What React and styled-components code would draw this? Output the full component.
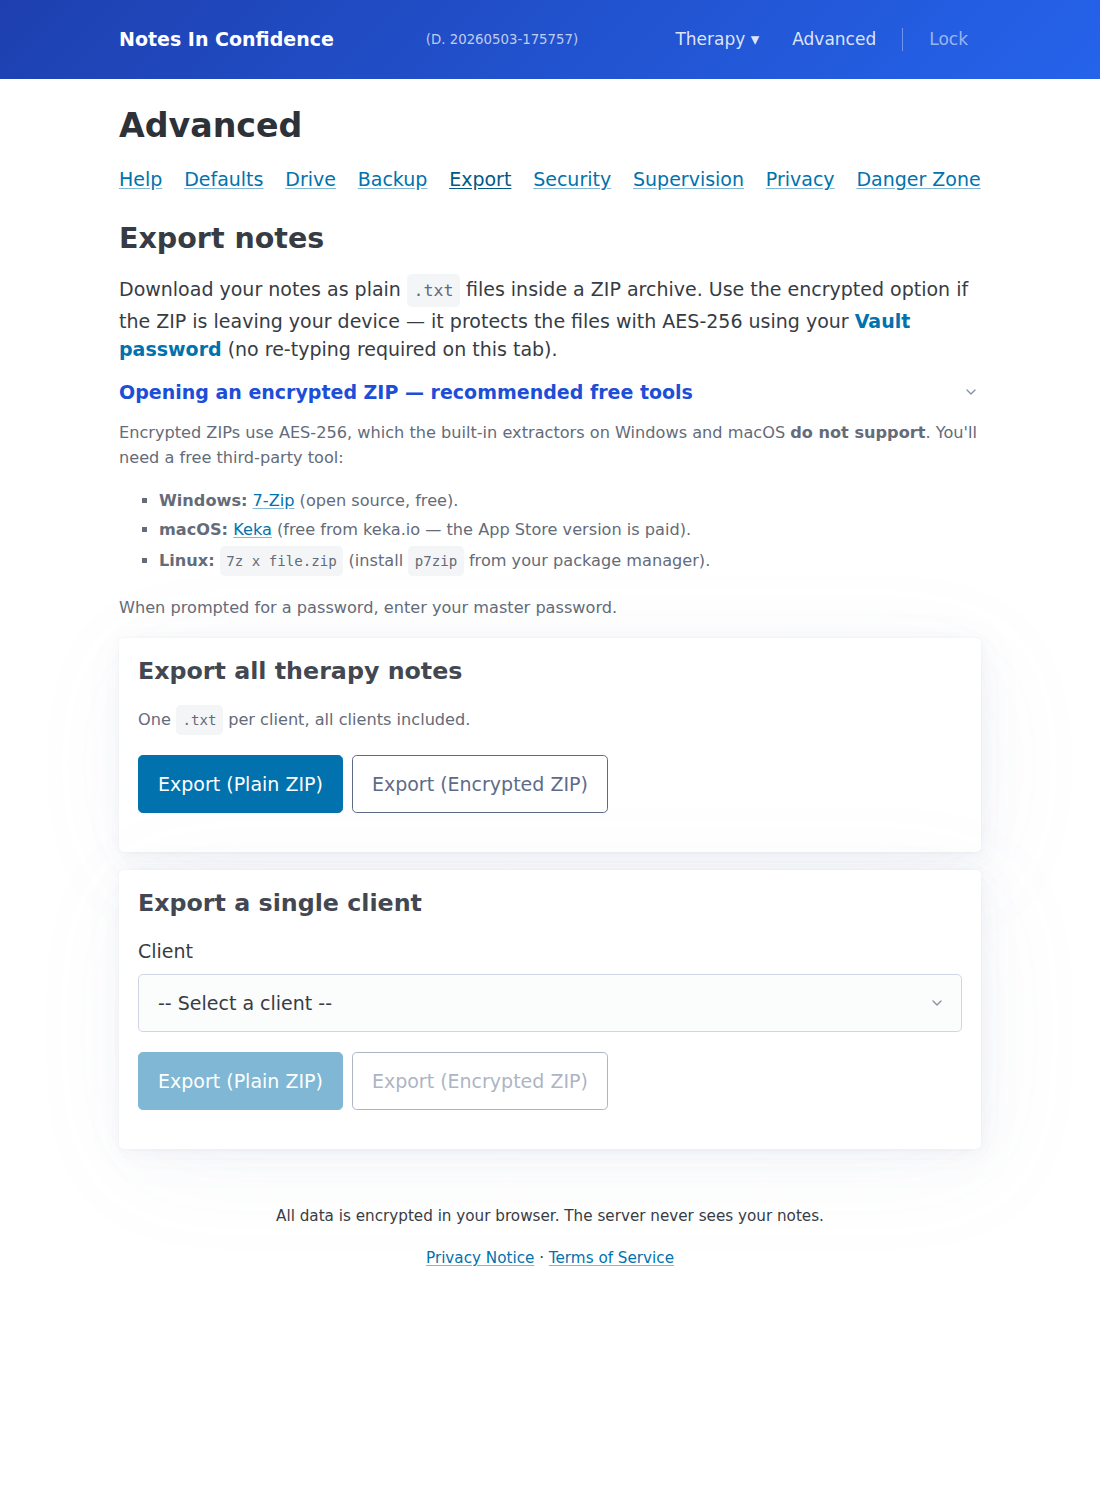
import React from 'react';
import styled, { createGlobalStyle } from 'styled-components';

const GlobalStyle = createGlobalStyle`
	html {
		font-size: 19px;
	}
	body {
		margin: 0;
		background: #fff;
		color: #373c44;
		font-family: "DejaVu Sans", "Noto Sans", sans-serif;
		line-height: 1.5;
	}
	* {
		box-sizing: border-box;
	}
`

const Header = styled.header`
	height: 79px;
	background: linear-gradient(135deg, #1e40af 0%, #2563eb 100%);
`

const HeaderInner = styled.div`
	max-width: 862px;
	height: 100%;
	margin: 0 auto;
	display: flex;
	align-items: center;
`

const Brand = styled.div`
	font-size: 19px;
	font-weight: bold;
	color: #fff;
`

const Build = styled.span`
	margin-left: 92px;
	font-size: 13.3px;
	color: rgba(255, 255, 255, 0.72);
`

const HeaderNav = styled.nav`
	margin-left: auto;
	padding-right: 13px;
	display: flex;
	align-items: center;
	gap: 33px;
`

const NavItem = styled.a`
	font-size: 17px;
	color: ${p => p.$dim ? 'rgba(255, 255, 255, 0.55)' : 'rgba(255, 255, 255, 0.85)'};
	text-decoration: none;
`

const NavDivider = styled.span`
	width: 1px;
	height: 23px;
	margin: 0 -7px;
	background: rgba(255, 255, 255, 0.35);
`

const Main = styled.main`
	max-width: 862px;
	margin: 0 auto;
	padding-top: 28px;
`

const Title = styled.h1`
	margin: 0 0 21px;
	font-size: 33.25px;
	line-height: 1.125;
	font-weight: bold;
	color: #2d3138;
`

const Tabs = styled.nav`
	display: flex;
	gap: 21.8px;
	margin-bottom: 29px;
	line-height: 28.5px;
	white-space: nowrap;
`

const Tab = styled.a`
	flex-shrink: 0;
	font-size: 19px;
	color: ${p => p.$active ? '#015887' : '#0172ad'};
	text-decoration: underline;
	text-decoration-color: ${p => p.$active ? '#015887' : 'rgba(1, 114, 173, 0.5)'};
	text-underline-offset: 0.125em;
`

const Heading = styled.h2`
	margin: 0 0 18px;
	font-size: 28.5px;
	line-height: 1.15;
	color: #373c44;
`

const Lead = styled.p`
	margin: 0 0 14px;
	font-size: 19px;
	line-height: 28.5px;
`

const Code = styled.code`
	display: inline-block;
	padding: ${p => p.$small ? '6.8px 6.5px' : '7px 6.5px'};
	border-radius: 4.75px;
	background: #f3f5f7;
	color: #646b79;
	font-family: "DejaVu Sans Mono", monospace;
	font-size: 0.875em;
	line-height: 1.15;
`

const StrongLink = styled.a`
	color: #0172ad;
	font-weight: bold;
	text-decoration: none;
`

const Details = styled.details`
	color: #646b79;
`

const Summary = styled.summary`
	display: flex;
	align-items: center;
	justify-content: space-between;
	list-style: none;
	cursor: pointer;
	font-size: 19px;
	line-height: 28.5px;
	font-weight: bold;
	color: #1d4ed8;
	&::-webkit-details-marker {
		display: none;
	}
	svg {
		margin-right: 2px;
	}
`

const Small = styled.p`
	margin: ${p => p.$margin || '0'};
	font-size: ${p => p.$size || '16.15px'};
	line-height: 25px;
	color: ${p => p.$color || '#646b79'};
`

const List = styled.ul`
	margin: 0 0 18.5px;
	padding-left: 40px;
	list-style: square;
	font-size: 16.15px;
	line-height: 25px;
`

const Item = styled.li`
	margin-bottom: ${p => p.$last ? '0' : '4px'};
	b {
		font-weight: bold;
	}
`

const Link = styled.a`
	color: #0172ad;
	text-decoration: underline;
	text-decoration-color: rgba(1, 114, 173, 0.5);
	text-underline-offset: 0.125em;
`

const Card = styled.article`
	margin: ${p => p.$first ? '18.5px' : '18px'} 0 0;
	padding: 19px 19px 39px;
	background: #fff;
	border-radius: 4.75px;
	box-shadow:
		0.0145rem 0.029rem 0.174rem rgba(129, 145, 181, 0.017),
		0.0335rem 0.067rem 0.402rem rgba(129, 145, 181, 0.024),
		0.0625rem 0.125rem 0.75rem rgba(129, 145, 181, 0.03),
		0.1125rem 0.225rem 1.35rem rgba(129, 145, 181, 0.036),
		0.2085rem 0.417rem 2.502rem rgba(129, 145, 181, 0.043),
		0.5rem 1rem 6rem rgba(129, 145, 181, 0.06),
		0 0 0 0.0625rem rgba(129, 145, 181, 0.015);
`

const CardTitle = styled.h3`
	margin: 0 0 19.5px;
	font-size: 23.75px;
	line-height: 28.5px;
	color: #424751;
`

const Buttons = styled.div`
	display: flex;
	gap: 9px;
	margin-top: ${p => p.$top || '20px'};
`

const Button = styled.button`
	padding: 14px 19px;
	border: 1px solid ${p => p.$outline ? '#5d6b89' : '#0172ad'};
	border-radius: 4.75px;
	background: ${p => p.$outline ? 'transparent' : '#0172ad'};
	color: ${p => p.$outline ? '#5d6b89' : '#fff'};
	font-family: inherit;
	font-size: 19px;
	line-height: 28.5px;
	cursor: pointer;
	&:disabled {
		opacity: 0.5;
		cursor: not-allowed;
	}
`

const Label = styled.label`
	display: block;
	margin: 0 0 8px;
	font-size: 19px;
	line-height: 28.5px;
	color: #373c44;
`

const SelectWrap = styled.div`
	position: relative;
	svg {
		position: absolute;
		right: 17px;
		top: 50%;
		transform: translateY(-50%);
		pointer-events: none;
	}
`

const Select = styled.select`
	display: block;
	width: 100%;
	height: 58px;
	padding: 0 19px;
	appearance: none;
	border: 1px solid #cfd5e2;
	border-radius: 4.75px;
	background: #fbfcfc;
	color: #373c44;
	font-family: inherit;
	font-size: 19px;
`

const Footer = styled.footer`
	padding: 55px 0 60px;
	text-align: center;
`

const Chevron = () => (
	<svg width="16" height="16" viewBox="0 0 24 24" fill="none" stroke="#8891a4" strokeWidth="2" strokeLinecap="round" strokeLinejoin="round">
		<polyline points="6 9 12 15 18 9" />
	</svg>
);

const App = () => {
	const tabs = ['Help', 'Defaults', 'Drive', 'Backup', 'Export', 'Security', 'Supervision', 'Privacy', 'Danger Zone'];
	return(
		<>
			<GlobalStyle />
			<Header>
				<HeaderInner>
					<Brand>Notes In Confidence</Brand>
					<Build>(D. 20260503-175757)</Build>
					<HeaderNav>
						<NavItem href="#">Therapy ▾</NavItem>
						<NavItem href="#">Advanced</NavItem>
						<NavDivider />
						<NavItem href="#" $dim>Lock</NavItem>
					</HeaderNav>
				</HeaderInner>
			</Header>
			<Main>
				<Title>Advanced</Title>
				<Tabs>
					{tabs.map(t => <Tab key={t} href="#" $active={t === 'Export'}>{t}</Tab>)}
				</Tabs>
				<Heading>Export notes</Heading>
				<Lead>
					Download your notes as plain <Code>.txt</Code> files inside a ZIP archive. Use the encrypted option if the ZIP is leaving your device — it protects the files with AES-256 using your <StrongLink href="#">Vault password</StrongLink> (no re-typing required on this tab).
				</Lead>
				<Details open>
					<Summary>
						Opening an encrypted ZIP — recommended free tools
						<Chevron />
					</Summary>
					<Small $margin="14px 0 18px">
						Encrypted ZIPs use AES-256, which the built-in extractors on Windows and macOS <b>do not support</b>. You'll need a free third-party tool:
					</Small>
					<List>
						<Item><b>Windows:</b> <Link href="#">7-Zip</Link> (open source, free).</Item>
						<Item><b>macOS:</b> <Link href="#">Keka</Link> (free from keka.io — the App Store version is paid).</Item>
						<Item $last><b>Linux:</b> <Code $small>7z x file.zip</Code> (install <Code $small>p7zip</Code> from your package manager).</Item>
					</List>
					<Small>When prompted for a password, enter your master password.</Small>
				</Details>
				<Card $first>
					<CardTitle>Export all therapy notes</CardTitle>
					<Small>One <Code $small>.txt</Code> per client, all clients included.</Small>
					<Buttons>
						<Button>Export (Plain ZIP)</Button>
						<Button $outline>Export (Encrypted ZIP)</Button>
					</Buttons>
				</Card>
				<Card>
					<CardTitle>Export a single client</CardTitle>
					<Label htmlFor="client">Client</Label>
					<SelectWrap>
						<Select id="client" defaultValue="">
							<option value="">-- Select a client --</option>
						</Select>
						<Chevron />
					</SelectWrap>
					<Buttons $top="20px">
						<Button disabled>Export (Plain ZIP)</Button>
						<Button $outline disabled>Export (Encrypted ZIP)</Button>
					</Buttons>
				</Card>
				<Footer>
					<Small $size="15.2px" $color="#373c44">All data is encrypted in your browser. The server never sees your notes.</Small>
					<Small $size="15.2px" $margin="17px 0 0" $color="#373c44">
						<Link href="#">Privacy Notice</Link> · <Link href="#">Terms of Service</Link>
					</Small>
				</Footer>
			</Main>
		</>
	);
}

export default App;
